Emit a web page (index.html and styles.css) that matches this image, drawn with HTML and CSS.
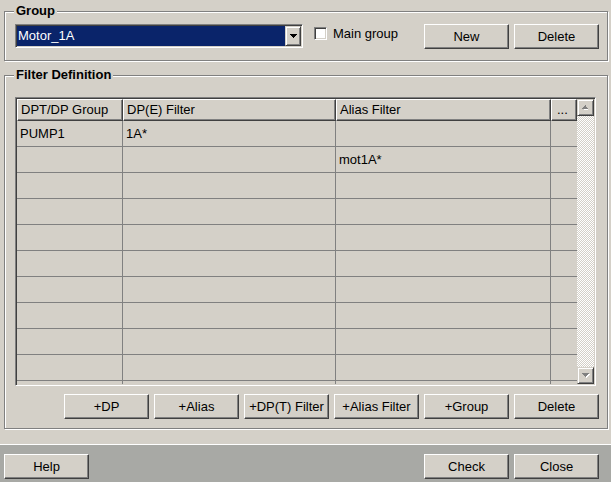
FILE: index.html
```html
<!DOCTYPE html>
<html>
<head>
<meta charset="utf-8">
<link rel="stylesheet" href="styles.css">
</head>
<body>
<div class="box box-group">
  <span class="box-title">Group</span>
  <div class="group-row">
    <div class="combo">
      <div class="combo-value">Motor_1A</div>
      <div class="combo-btn">
        <svg width="7" height="4" viewBox="0 0 7 4" shape-rendering="crispEdges"><path d="M0 0H7V1H6V2H5V3H4V4H3V3H2V2H1V1H0Z" fill="#000"/></svg>
      </div>
    </div>
    <label class="check"><span class="check-box"></span><span class="check-label">Main group</span></label>
    <div class="btn-row push-right">
      <button class="btn">New</button>
      <button class="btn">Delete</button>
    </div>
  </div>
</div>

<div class="box box-filter">
  <span class="box-title">Filter Definition</span>
  <div class="grid">
    <div class="grid-cells">
      <div class="grid-row grid-head">
        <div class="hcell">DPT/DP Group</div>
        <div class="hcell">DP(E) Filter</div>
        <div class="hcell">Alias Filter</div>
        <div class="hcell hcell-more">...</div>
      </div>
      <div class="grid-row"><div class="cell">PUMP1</div><div class="cell">1A*</div><div class="cell"></div><div class="cell cell-last"></div></div>
      <div class="grid-row"><div class="cell"></div><div class="cell"></div><div class="cell">mot1A*</div><div class="cell cell-last"></div></div>
      <div class="grid-row"><div class="cell"></div><div class="cell"></div><div class="cell"></div><div class="cell cell-last"></div></div>
      <div class="grid-row"><div class="cell"></div><div class="cell"></div><div class="cell"></div><div class="cell cell-last"></div></div>
      <div class="grid-row"><div class="cell"></div><div class="cell"></div><div class="cell"></div><div class="cell cell-last"></div></div>
      <div class="grid-row"><div class="cell"></div><div class="cell"></div><div class="cell"></div><div class="cell cell-last"></div></div>
      <div class="grid-row"><div class="cell"></div><div class="cell"></div><div class="cell"></div><div class="cell cell-last"></div></div>
      <div class="grid-row"><div class="cell"></div><div class="cell"></div><div class="cell"></div><div class="cell cell-last"></div></div>
      <div class="grid-row"><div class="cell"></div><div class="cell"></div><div class="cell"></div><div class="cell cell-last"></div></div>
      <div class="grid-row"><div class="cell"></div><div class="cell"></div><div class="cell"></div><div class="cell cell-last"></div></div>
      <div class="grid-row"><div class="cell"></div><div class="cell"></div><div class="cell"></div><div class="cell cell-last"></div></div>
    </div>
    <div class="vscroll">
      <div class="sbtn">
        <svg width="7" height="5" viewBox="0 0 8 5" shape-rendering="crispEdges"><path d="M4 2H5V3H6V4H7V5H2V4H3V3H4Z" fill="#fff"/><path d="M3 0H4V1H5V2H6V3H7V4H0V3H1V2H2V1H3Z" fill="#808080"/></svg>
      </div>
      <div class="strack"></div>
      <div class="sbtn">
        <svg width="8" height="5" viewBox="0 0 8 5" shape-rendering="crispEdges"><path d="M1 1H8V2H7V3H6V4H5V5H4V4H3V3H2V2H1Z" fill="#fff"/><path d="M0 0H7V1H6V2H5V3H4V4H3V3H2V2H1V1H0Z" fill="#808080"/></svg>
      </div>
    </div>
  </div>
  <div class="btn-row filter-btns">
    <button class="btn">+DP</button>
    <button class="btn">+Alias</button>
    <button class="btn">+DP(T) Filter</button>
    <button class="btn">+Alias Filter</button>
    <button class="btn">+Group</button>
    <button class="btn">Delete</button>
  </div>
</div>

<div class="footer">
  <button class="btn">Help</button>
  <div class="btn-row">
    <button class="btn">Check</button>
    <button class="btn">Close</button>
  </div>
</div>
</body>
</html>
```

FILE: styles.css
```css
* { box-sizing: border-box; }

html, body {
  margin: 0;
  padding: 0;
}

body {
  width: 611px;
  height: 482px;
  overflow: hidden;
  background: #d4d0c8;
  font-family: "Liberation Sans", Arial, sans-serif;
  font-size: 13px;
  color: #000;
}

.box {
  position: relative;
  margin-left: 4px;
  width: 604px;
  border: 1px solid #808080;
  box-shadow: inset 1px 1px 0 #fff, 1px 1px 0 #fff;
  padding: 0 8px 0 10px;
}

.box-title {
  position: absolute;
  top: -8px;
  left: 9px;
  padding: 0 2px;
  line-height: 14px;
  font-weight: bold;
  background: #d4d0c8;
}

.box-group {
  margin-top: 11px;
  padding-top: 12px;
  padding-bottom: 11px;
}

.box-filter {
  margin-top: 14px;
  padding-top: 21px;
  padding-bottom: 9px;
}

.group-row {
  display: flex;
  align-items: flex-start;
  height: 25px;
}

.combo {
  width: 288px;
  height: 24px;
  display: flex;
  border: 1px solid;
  border-color: #808080 #fff #fff #808080;
  box-shadow: inset 1px 1px 0 #404040, inset -1px -1px 0 #d4d0c8;
  padding: 1px;
}

.combo-value {
  flex: 1;
  background: #0a246a;
  color: #fff;
  padding-left: 1px;
  line-height: 20px;
}

.combo-btn {
  width: 16px;
  height: 20px;
  display: flex;
  align-items: center;
  justify-content: center;
  background: #d4d0c8;
  border: 1px solid;
  border-color: #d4d0c8 #404040 #404040 #d4d0c8;
  box-shadow: inset 1px 1px 0 #fff, inset -1px -1px 0 #808080;
}

.check {
  display: flex;
  align-items: center;
  margin-left: 11px;
  margin-top: 3px;
  height: 13px;
}

.check-box {
  width: 13px;
  height: 13px;
  background: #fff;
  border: 1px solid;
  border-color: #808080 #fff #fff #808080;
  box-shadow: inset 1px 1px 0 #404040, inset -1px -1px 0 #d4d0c8;
}

.check-label {
  margin-left: 6px;
  line-height: 14px;
}

.btn-row {
  display: flex;
  gap: 5px;
}

.push-right {
  margin-left: auto;
}

.btn {
  width: 85px;
  height: 25px;
  padding: 0;
  margin: 0;
  font: inherit;
  color: #000;
  background: #d4d0c8;
  border: 1px solid;
  border-color: #fff #404040 #404040 #fff;
  box-shadow: inset -1px -1px 0 #808080;
  border-radius: 0;
}

.grid {
  width: 581px;
  height: 289px;
  display: flex;
  border: 1px solid;
  border-color: #808080 #fff #fff #808080;
  box-shadow: inset 1px 1px 0 #404040, inset -1px -1px 0 #d4d0c8;
  padding: 1px;
}

.grid-cells {
  width: 560px;
  height: 285px;
  overflow: hidden;
}

.grid-row {
  display: grid;
  grid-template-columns: 106px 213px 215px 26px;
  height: 26px;
}

.grid-head {
  height: 22px;
}

.hcell {
  border: 1px solid;
  border-color: #fff #404040 #404040 #fff;
  box-shadow: inset -1px -1px 0 #808080;
  padding-left: 3px;
  line-height: 19px;
  white-space: nowrap;
  overflow: hidden;
}

.hcell-more {
  padding-left: 5px;
}

.cell {
  border-right: 1px solid #808080;
  border-bottom: 1px solid #808080;
  padding-left: 3px;
  line-height: 25px;
  white-space: nowrap;
}

.cell-last {
  border-right: none;
}

.vscroll {
  width: 17px;
  height: 285px;
  display: flex;
  flex-direction: column;
}

.sbtn {
  width: 17px;
  height: 17px;
  display: flex;
  align-items: center;
  justify-content: center;
  background: #d4d0c8;
  border: 1px solid;
  border-color: #d4d0c8 #404040 #404040 #d4d0c8;
  box-shadow: inset 1px 1px 0 #fff, inset -1px -1px 0 #808080;
}

.strack {
  flex: 1;
  background: repeating-conic-gradient(#fff 0 25%, #d4d0c8 0 50%) 0 0 / 2px 2px;
}

.filter-btns {
  margin-top: 8px;
  justify-content: flex-end;
}

.footer {
  margin-top: 15px;
  height: 38px;
  border-top: 1px solid #fff;
  background: #a8a9a5;
  padding: 9px 12px 0 4px;
  display: flex;
  justify-content: space-between;
  align-items: flex-start;
}
```
